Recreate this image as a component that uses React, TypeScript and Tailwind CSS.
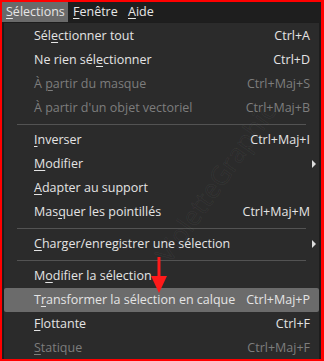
import React from 'react';

type Item =
  | { sep: true }
  | { sep?: false; label: React.ReactNode; shortcut?: string; disabled?: boolean; submenu?: boolean; active?: boolean };

// underline one letter of a label (menu mnemonic)
const u = (before: string, letter: string, after: string) => (
  <>
    {before}
    <span className="underline underline-offset-2">{letter}</span>
    {after}
  </>
);

const ITEMS: Item[] = [
  { label: u('Sél', 'e', 'ctionner tout'), shortcut: 'Ctrl+A' },
  { label: u('Ne rien sél', 'e', 'ctionner'), shortcut: 'Ctrl+D' },
  { label: u('À ', 'p', 'artir du masque'), shortcut: 'Ctrl+Maj+S', disabled: true },
  { label: u("À partir d'un ob", 'j', 'et vectoriel'), shortcut: 'Ctrl+Maj+B', disabled: true },
  { sep: true },
  { label: u('', 'I', 'nverser'), shortcut: 'Ctrl+Maj+I' },
  { label: u('', 'M', 'odifier'), submenu: true },
  { label: u('', 'A', 'dapter au support') },
  { label: u('Mas', 'q', 'uer les pointillés'), shortcut: 'Ctrl+Maj+M' },
  { sep: true },
  { label: u('', 'C', 'harger/enregistrer une sélection'), submenu: true },
  { sep: true },
  { label: u('M', 'o', 'difier la sélection') },
  { label: u('T', 'r', 'ansformer la sélection en calque'), shortcut: 'Ctrl+Maj+P', active: true },
  { label: u('', 'F', 'lottante'), shortcut: 'Ctrl+F' },
  { label: u('', 'S', 'tatique'), shortcut: 'Ctrl+Maj+F', disabled: true },
];

export default function App() {
  return (
    <div
      className="w-[324px] h-[361px] bg-[#ff0000] pl-[2px] pt-[2px] pr-[3px] pb-[2px]"
      style={{ fontFamily: '"Open Sans", "Noto Sans", sans-serif' }}
    >
      <div className="flex flex-col h-full bg-[#1d1d1d] overflow-hidden">
        {/* menu bar */}
        <div className="flex h-[20px] text-[12.5px] text-[#e6e6e6] bg-[#1e1e1e] leading-[20px]">
          <div className="bg-[#6a6a6a] pl-[4px] w-[66px]">{u('', 'S', 'élections')}</div>
          <div className="pl-[5px] w-[55px]">{u('', 'F', 'enêtre')}</div>
          <div className="pl-[5px]">{u('', 'A', 'ide')}</div>
        </div>

        {/* dropdown */}
        <div className="relative flex-1 ml-[1px] mr-[2px] mt-[1px] bg-[#2b2b2b] border-l border-[#1a1a1a] pt-[1px] overflow-hidden">
          {/* watermark */}
          <div className="absolute left-[118px] top-[140px] -rotate-[55deg] text-[26px] text-transparent pointer-events-none select-none [-webkit-text-stroke:0.6px_rgba(255,255,255,0.07)] whitespace-nowrap">
            VioletteGraphic
          </div>

          {ITEMS.map((it, i) =>
            it.sep ? (
              <div key={i} className="h-[8px] flex items-center px-[13px]">
                <div className="h-px w-full bg-[#535353]" />
              </div>
            ) : (
              <div
                key={i}
                className={`relative flex items-center h-[24px] text-[12.5px] pl-[30px] pr-[9px] ${
                  it.active ? 'bg-[#6b6b6b] rounded-[2px]' : ''
                } ${it.disabled ? 'text-[#7d7d7d]' : 'text-[#e4e4e4]'}`}
              >
                <span className="flex-1 whitespace-nowrap">{it.label}</span>
                {it.shortcut && <span className="whitespace-nowrap">{it.shortcut}</span>}
                {it.submenu && (
                  <svg className="absolute right-[2px]" width="6" height="8" viewBox="0 0 6 8">
                    <path d="M1 0 L5 4 L1 8 Z" fill="#dcdcdc" />
                  </svg>
                )}
              </div>
            )
          )}

          {/* red arrow */}
          <svg className="absolute left-[146px] top-[234px]" width="18" height="36" viewBox="0 0 18 36">
            <rect x="7.5" y="0" width="3" height="20" fill="#ff1a1a" />
            <path d="M1 19 L17 19 L9 36 Z" fill="#ff1a1a" />
          </svg>
        </div>
      </div>
    </div>
  );
}
